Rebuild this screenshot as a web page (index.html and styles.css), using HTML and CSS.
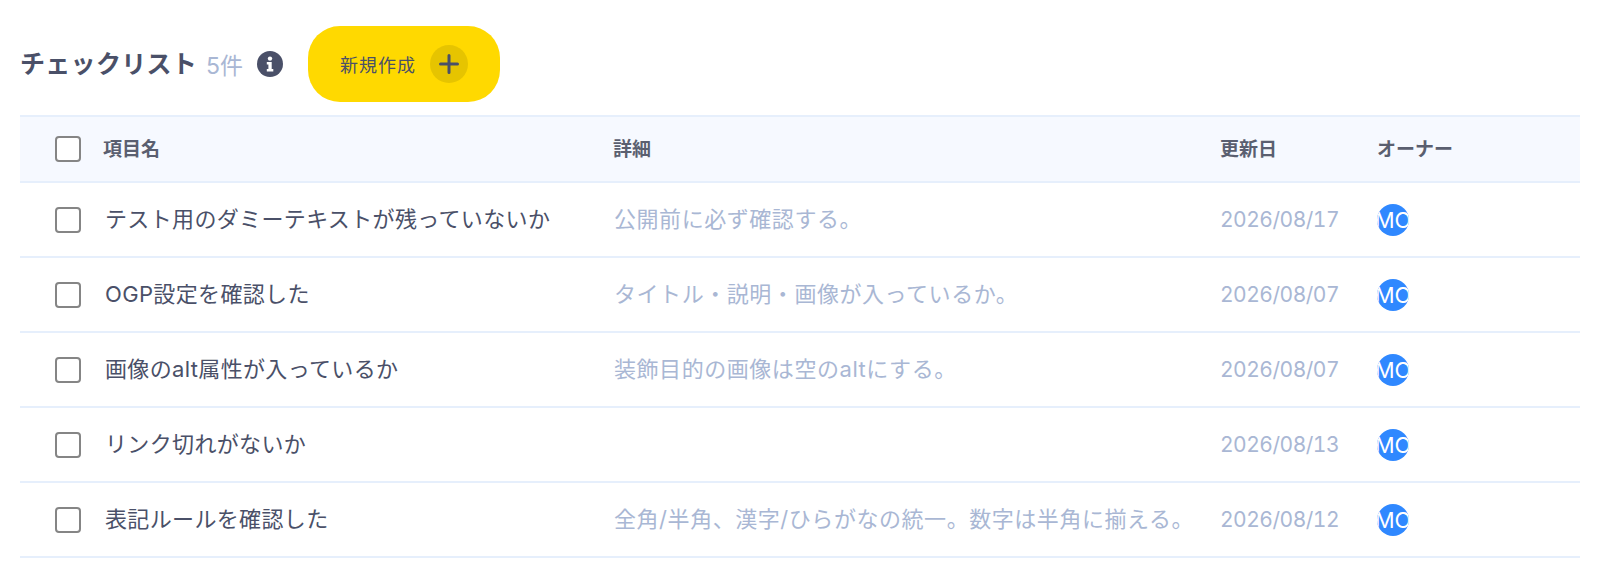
FILE: index.html
```html
<!DOCTYPE html>
<html lang="ja">
<head>
<meta charset="utf-8">
<title>チェックリスト</title>
<link rel="stylesheet" href="styles.css">
</head>
<body>
<main class="page">
  <header class="head">
    <h1 class="title">チェックリスト</h1>
    <span class="count">5件</span>
    <svg class="info" viewBox="0 0 26 26" width="26" height="26" aria-hidden="true">
      <circle cx="13" cy="13" r="13" fill="#4a5068"/>
      <circle cx="13" cy="7.6" r="2.2" fill="#fff"/>
      <path d="M9.8 11h4.900v7h1.600v2.400H9.800V18h1.600v-4.600H9.800z" fill="#fff"/>
    </svg>
    <button class="new" type="button">
      <span>新規作成</span>
      <span class="plus">
        <svg viewBox="0 0 20 20" width="20" height="20" aria-hidden="true"><path d="M10 1.500v17M1.500 10h17" stroke="#4a5068" stroke-width="3" stroke-linecap="round" fill="none"/></svg>
      </span>
    </button>
  </header>
  <div class="table">
    <div class="row hdr">
      <div class="c-check"><span class="box"></span></div>
      <div class="c-name">項目名</div>
      <div class="c-detail">詳細</div>
      <div class="c-date">更新日</div>
      <div class="c-owner">オーナー</div>
    </div>
    <div class="row">
      <div class="c-check"><span class="box"></span></div>
      <div class="c-name">テスト用のダミーテキストが残っていないか</div>
      <div class="c-detail">公開前に必ず確認する。</div>
      <div class="c-date">2026/08/17</div>
      <div class="c-owner"><span class="avatar">MO</span></div>
    </div>
    <div class="row">
      <div class="c-check"><span class="box"></span></div>
      <div class="c-name">OGP設定を確認した</div>
      <div class="c-detail">タイトル・説明・画像が入っているか。</div>
      <div class="c-date">2026/08/07</div>
      <div class="c-owner"><span class="avatar">MO</span></div>
    </div>
    <div class="row">
      <div class="c-check"><span class="box"></span></div>
      <div class="c-name">画像のalt属性が入っているか</div>
      <div class="c-detail">装飾目的の画像は空のaltにする。</div>
      <div class="c-date">2026/08/07</div>
      <div class="c-owner"><span class="avatar">MO</span></div>
    </div>
    <div class="row">
      <div class="c-check"><span class="box"></span></div>
      <div class="c-name">リンク切れがないか</div>
      <div class="c-detail"></div>
      <div class="c-date">2026/08/13</div>
      <div class="c-owner"><span class="avatar">MO</span></div>
    </div>
    <div class="row">
      <div class="c-check"><span class="box"></span></div>
      <div class="c-name">表記ルールを確認した</div>
      <div class="c-detail">全角/半角、漢字/ひらがなの統一。数字は半角に揃える。</div>
      <div class="c-date">2026/08/12</div>
      <div class="c-owner"><span class="avatar">MO</span></div>
    </div>
  </div>
</main>
</body>
</html>
```
FILE: styles.css
```css
* { box-sizing: border-box; }
html, body { margin: 0; padding: 0; background: #fff; }
body {
  font-family: Inter, "Noto Sans CJK JP", sans-serif;
  color: #4a5068;
  overflow: hidden;
}
.page { padding: 26px 20px 0; }
.head { display: flex; align-items: center; height: 76px; margin-bottom: 13px; }
.title { margin: 0; font-size: 25px; letter-spacing: 0.3px; font-weight: 700; line-height: 1; color: #4a5068; }
.count { margin-left: 9px; font-size: 23px; color: #a9b7d4; }
.info { margin-left: 14px; flex: none; }
.new {
  margin-left: 25px;
  width: 192px;
  height: 76px;
  padding: 0 32px;
  display: flex;
  align-items: center;
  justify-content: space-between;
  background: #ffd900;
  border: 0;
  border-radius: 32px;
  font: inherit;
  font-size: 18px;
  letter-spacing: 1px;
  color: #4a5068;
}
.plus {
  width: 38px;
  height: 38px;
  border-radius: 50%;
  background: #e6c400;
  display: flex;
  align-items: center;
  justify-content: center;
}
.table { border-top: 2px solid #e6effc; }
.row {
  display: flex;
  align-items: center;
  height: 75px;
  border-bottom: 2px solid #e6effc;
  font-size: 22px;
  line-height: 1.2;
  color: #4a5068;
}
.hdr {
  height: 66px;
  padding-top: 2px;
  background: #f6f9ff;
  font-size: 19px;
  font-weight: 700;
  color: #5a5f70;
}
.c-check { width: 85px; padding-left: 35px; flex: none; display: flex; }
.hdr .c-check { margin-top: -2px; }
.box {
  width: 26px;
  height: 26px;
  background: #fff;
  border: 2px solid #858585;
  border-radius: 4px;
}
.c-name { width: 510px; flex: none; letter-spacing: 0.35px; }
.c-detail { width: 605px; flex: none; color: #a9b7d4; letter-spacing: 0.55px; text-indent: -1px; }
.hdr .c-name, .hdr .c-detail { letter-spacing: 0; text-indent: -2px; }
.hdr .c-detail { color: inherit; }
.c-date { width: 157px; flex: none; color: #a9b7d4; font-size: 21px; letter-spacing: -0.5px; font-variant-numeric: tabular-nums; }
.hdr .c-date { color: inherit; font-size: 19px; letter-spacing: 0; }
.c-owner { flex: 1; }
.avatar {
  display: flex;
  align-items: center;
  justify-content: center;
  width: 32px;
  height: 32px;
  border-radius: 50%;
  overflow: hidden;
  background: #2f88ff;
  color: #fff;
  font-size: 22px;
  line-height: 32px;
  white-space: nowrap;
}
```
